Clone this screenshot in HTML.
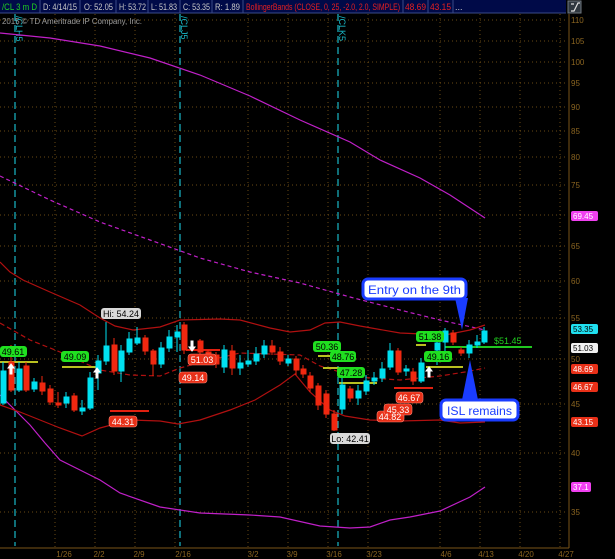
<!DOCTYPE html>
<html><head><meta charset="utf-8"><style>
html,body{margin:0;padding:0;background:#000;}
svg{display:block;font-family:"Liberation Sans",sans-serif;}
</style></head><body>
<svg width="615" height="559" viewBox="0 0 615 559" xmlns="http://www.w3.org/2000/svg">
<rect width="615" height="559" fill="#000"/>
<g stroke="#6a4a14" stroke-width="1" stroke-dasharray="1,3">
<line x1="0" y1="20" x2="566" y2="20"/><line x1="0" y1="41" x2="566" y2="41"/><line x1="0" y1="62" x2="566" y2="62"/><line x1="0" y1="83" x2="566" y2="83"/><line x1="0" y1="107" x2="566" y2="107"/><line x1="0" y1="131" x2="566" y2="131"/><line x1="0" y1="157" x2="566" y2="157"/><line x1="0" y1="185" x2="566" y2="185"/><line x1="0" y1="215" x2="566" y2="215"/><line x1="0" y1="246" x2="566" y2="246"/><line x1="0" y1="281" x2="566" y2="281"/><line x1="0" y1="318" x2="566" y2="318"/><line x1="0" y1="359" x2="566" y2="359"/><line x1="0" y1="404" x2="566" y2="404"/><line x1="0" y1="453" x2="566" y2="453"/><line x1="0" y1="512" x2="566" y2="512"/>
<line x1="55" y1="14" x2="55" y2="548"/><line x1="95" y1="14" x2="95" y2="548"/><line x1="135" y1="14" x2="135" y2="548"/><line x1="175" y1="14" x2="175" y2="548"/><line x1="248" y1="14" x2="248" y2="548"/><line x1="288" y1="14" x2="288" y2="548"/><line x1="328" y1="14" x2="328" y2="548"/><line x1="368" y1="14" x2="368" y2="548"/><line x1="440" y1="14" x2="440" y2="548"/><line x1="480" y1="14" x2="480" y2="548"/><line x1="520" y1="14" x2="520" y2="548"/><line x1="560" y1="14" x2="560" y2="548"/>
</g>
<g stroke="#19b8c8" stroke-width="1.2" stroke-dasharray="7,4">
<line x1="15" y1="14" x2="15" y2="546"/><line x1="180" y1="14" x2="180" y2="546"/><line x1="338" y1="14" x2="338" y2="546"/>
</g>
<g fill="#19b8c8" font-size="9">
<text transform="translate(16,16) rotate(90)">/CLH5</text>
<text transform="translate(181,16) rotate(90)">/CLJ5</text>
<text transform="translate(339,16) rotate(90)">/CLK5</text>
</g>
<text x="2" y="24" fill="#9a9a9a" font-size="8" textLength="140">2015 © TD Ameritrade IP Company, Inc.</text>
<g fill="none" stroke="#c020c8" stroke-width="1.2">
<polyline points="0,33 50,38 100,46 150,58 200,75 250,96 300,120 350,142 380,160 420,178 450,195 485,218"/>
<polyline points="0,395 15,410 30,425 45,443 60,460 80,470 100,480 120,493 160,507 200,513 250,515 280,517 320,526 350,528 370,527 390,520 410,517 440,511 470,497 485,487"/>
<polyline stroke-dasharray="4,3" points="0,176 50,200 100,222 150,240 200,258 250,272 300,283 350,297 400,310 440,320 485,330"/>
</g>
<g fill="none" stroke="#b01010" stroke-width="1.2">
<polyline points="0,262 10,272 23,280 50,292 80,305 100,318 115,326 133,330 160,327 180,320 220,319 240,320 270,328 290,332 310,330 325,323 340,322 360,326 400,333 445,335 470,330 485,325"/>
<polyline points="0,405 20,412 40,420 60,428 82,436 100,428 130,420 160,421 178,424 200,420 230,410 255,400 280,385 295,374 310,392 330,410 345,416 370,420 400,421 440,420 460,423 485,422"/>
<polyline stroke-dasharray="5,3" points="0,323 30,340 60,352 100,370 130,375 160,376 180,368 210,360 240,353 270,354 300,355 320,366 340,372 370,378 400,380 420,378 440,376 465,372 485,368"/>
</g>
<g stroke-width="2">
<line x1="0" y1="362" x2="38" y2="362" stroke="#b8c020"/>
<line x1="62" y1="367" x2="101" y2="367" stroke="#b8c020"/>
<line x1="318" y1="356" x2="348" y2="356" stroke="#b8c020"/>
<line x1="323" y1="368" x2="348" y2="368" stroke="#b8c020"/>
<line x1="339" y1="383" x2="377" y2="383" stroke="#b8c020"/>
<line x1="426" y1="367" x2="463" y2="367" stroke="#b8c020"/>
<line x1="416" y1="345" x2="426" y2="345" stroke="#b8c020"/>
<line x1="110" y1="411" x2="149" y2="411" stroke="#e02010"/>
<line x1="394" y1="388" x2="433" y2="388" stroke="#e02010"/>
<line x1="186" y1="350" x2="220" y2="350" stroke="#e02010"/>
<line x1="445" y1="347" x2="532" y2="347" stroke="#20c820"/>
</g>
<g>
<g stroke="#00e0f0" fill="#00e0f0">
<line x1="3" y1="362" x2="3" y2="405"/><rect x="1" y="371" width="5" height="32"/>
<line x1="19" y1="362" x2="19" y2="392"/><rect x="17" y="369" width="5" height="21"/>
<line x1="34" y1="378" x2="34" y2="392"/><rect x="32" y="382" width="5" height="7"/>
<line x1="66" y1="392" x2="66" y2="408"/><rect x="64" y="397" width="5" height="6"/>
<line x1="82" y1="400" x2="82" y2="415"/><rect x="80" y="408" width="5" height="3"/>
<line x1="90" y1="372" x2="90" y2="410"/><rect x="88" y="378" width="5" height="30"/>
<line x1="98" y1="355" x2="98" y2="390"/><rect x="96" y="361" width="5" height="12"/>
<line x1="106" y1="322" x2="106" y2="365"/><rect x="104" y="346" width="5" height="15"/>
<line x1="121" y1="345" x2="121" y2="382"/><rect x="119" y="351" width="5" height="20"/>
<line x1="129" y1="332" x2="129" y2="355"/><rect x="127" y="339" width="5" height="13"/>
<line x1="137" y1="327" x2="137" y2="345"/><rect x="135" y="338" width="5" height="5"/>
<line x1="161" y1="342" x2="161" y2="368"/><rect x="159" y="348" width="5" height="16"/>
<line x1="169" y1="330" x2="169" y2="352"/><rect x="167" y="337" width="5" height="11"/>
<line x1="177" y1="325" x2="177" y2="352"/><rect x="175" y="332" width="5" height="5"/>
<line x1="224" y1="345" x2="224" y2="373"/><rect x="222" y="350" width="5" height="17"/>
<line x1="240" y1="355" x2="240" y2="375"/><rect x="238" y="363" width="5" height="5"/>
<line x1="248" y1="350" x2="248" y2="367"/><rect x="246" y="361" width="5" height="3"/>
<line x1="256" y1="347" x2="256" y2="365"/><rect x="254" y="354" width="5" height="7"/>
<line x1="264" y1="340" x2="264" y2="358"/><rect x="262" y="346" width="5" height="8"/>
<line x1="288" y1="355" x2="288" y2="366"/><rect x="286" y="359" width="5" height="4"/>
<line x1="342" y1="375" x2="342" y2="414"/><rect x="340" y="385" width="5" height="24"/>
<line x1="358" y1="385" x2="358" y2="405"/><rect x="356" y="391" width="5" height="7"/>
<line x1="366" y1="375" x2="366" y2="395"/><rect x="364" y="381" width="5" height="10"/>
<line x1="374" y1="372" x2="374" y2="385"/><rect x="372" y="378" width="5" height="3"/>
<line x1="382" y1="362" x2="382" y2="382"/><rect x="380" y="369" width="5" height="9"/>
<line x1="390" y1="343" x2="390" y2="370"/><rect x="388" y="351" width="5" height="16"/>
<line x1="406" y1="365" x2="406" y2="376"/><rect x="404" y="369" width="5" height="2"/>
<line x1="421" y1="358" x2="421" y2="383"/><rect x="419" y="363" width="5" height="18"/>
<line x1="437" y1="337" x2="437" y2="365"/><rect x="435" y="343" width="5" height="7"/>
<line x1="445" y1="328" x2="445" y2="352"/><rect x="443" y="331" width="5" height="11"/>
<line x1="469" y1="340" x2="469" y2="358"/><rect x="467" y="345" width="5" height="8"/>
<line x1="477" y1="335" x2="477" y2="348"/><rect x="475" y="342" width="5" height="3"/>
<line x1="484" y1="327" x2="484" y2="344"/><rect x="482" y="331" width="5" height="11"/>
</g>
<g stroke="#f02810" fill="#f02810">
<line x1="11" y1="345" x2="11" y2="392"/><rect x="9" y="362" width="5" height="28"/>
<line x1="26" y1="362" x2="26" y2="392"/><rect x="24" y="366" width="5" height="24"/>
<line x1="42" y1="376" x2="42" y2="395"/><rect x="40" y="383" width="5" height="8"/>
<line x1="50" y1="385" x2="50" y2="405"/><rect x="48" y="389" width="5" height="13"/>
<line x1="58" y1="392" x2="58" y2="408"/><rect x="56" y="403" width="5" height="2"/>
<line x1="74" y1="393" x2="74" y2="412"/><rect x="72" y="396" width="5" height="14"/>
<line x1="114" y1="338" x2="114" y2="375"/><rect x="112" y="345" width="5" height="26"/>
<line x1="145" y1="335" x2="145" y2="355"/><rect x="143" y="338" width="5" height="13"/>
<line x1="153" y1="349" x2="153" y2="376"/><rect x="151" y="351" width="5" height="13"/>
<line x1="184" y1="322" x2="184" y2="354"/><rect x="182" y="325" width="5" height="25"/>
<line x1="200" y1="339" x2="200" y2="358"/><rect x="198" y="341" width="5" height="11"/>
<line x1="208" y1="350" x2="208" y2="360"/><rect x="206" y="352" width="5" height="3"/>
<line x1="216" y1="352" x2="216" y2="368"/><rect x="214" y="355" width="5" height="9"/>
<line x1="232" y1="345" x2="232" y2="375"/><rect x="230" y="351" width="5" height="17"/>
<line x1="272" y1="340" x2="272" y2="355"/><rect x="270" y="346" width="5" height="6"/>
<line x1="280" y1="347" x2="280" y2="365"/><rect x="278" y="352" width="5" height="9"/>
<line x1="296" y1="356" x2="296" y2="375"/><rect x="294" y="359" width="5" height="11"/>
<line x1="303" y1="365" x2="303" y2="378"/><rect x="301" y="369" width="5" height="5"/>
<line x1="310" y1="372" x2="310" y2="392"/><rect x="308" y="376" width="5" height="12"/>
<line x1="318" y1="383" x2="318" y2="410"/><rect x="316" y="386" width="5" height="19"/>
<line x1="326" y1="390" x2="326" y2="418"/><rect x="324" y="394" width="5" height="20"/>
<line x1="334" y1="410" x2="334" y2="431"/><rect x="332" y="414" width="5" height="16"/>
<line x1="350" y1="386" x2="350" y2="402"/><rect x="348" y="389" width="5" height="9"/>
<line x1="398" y1="348" x2="398" y2="375"/><rect x="396" y="351" width="5" height="21"/>
<line x1="413" y1="368" x2="413" y2="385"/><rect x="411" y="372" width="5" height="9"/>
<line x1="453" y1="330" x2="453" y2="345"/><rect x="451" y="333" width="5" height="9"/>
<line x1="461" y1="347" x2="461" y2="356"/><rect x="459" y="350" width="5" height="3"/>
</g>
</g>
<g fill="#fff" stroke="#fff">
<path d="M11,364 l-3,4 h2 v6 h2 v-6 h2 z"/>
<path d="M97,368 l-3,4 h2 v6 h2 v-6 h2 z"/>
<path d="M429,367 l-3,4 h2 v6 h2 v-6 h2 z"/>
<path d="M192,351 l-3,-4 h2 v-6 h2 v6 h2 z"/>
</g>
<g font-size="9" text-anchor="middle">
<g fill="#20e020"><rect x="0" y="346" width="27" height="11" rx="3"/><rect x="61" y="351" width="28" height="11" rx="3"/><rect x="313" y="341" width="28" height="11" rx="3"/><rect x="330" y="351" width="26" height="11" rx="3"/><rect x="337" y="367" width="28" height="11" rx="3"/><rect x="416" y="331" width="28" height="11" rx="3"/><rect x="424" y="351" width="28" height="11" rx="3"/></g>
<g fill="#000"><text x="13" y="355">49.61</text><text x="75" y="360">49.09</text><text x="327" y="350">50.36</text><text x="343" y="360">48.76</text><text x="351" y="376">47.28</text><text x="430" y="340">51.38</text><text x="438" y="360">49.16</text></g>
<g fill="#e83018" stroke="#ff8070" stroke-width="0.6"><rect x="188" y="354" width="28" height="11" rx="3"/><rect x="179" y="372" width="28" height="11" rx="3"/><rect x="109" y="416" width="28" height="11" rx="3"/><rect x="377" y="411" width="27" height="11" rx="3"/><rect x="384" y="404" width="28" height="11" rx="3"/><rect x="396" y="392" width="27" height="11" rx="3"/></g>
<g fill="#fff"><text x="202" y="363">51.03</text><text x="193" y="381">49.14</text><text x="123" y="425">44.31</text><text x="390" y="420">44.82</text><text x="398" y="413">45.33</text><text x="409" y="401">46.67</text></g>
<rect x="101" y="308" width="40" height="11" rx="3" fill="#d8d8d8"/><text x="121" y="317" fill="#000">Hi: 54.24</text>
<rect x="330" y="433" width="40" height="11" rx="3" fill="#d8d8d8"/><text x="350" y="442" fill="#000">Lo: 42.41</text>
</g>
<text x="494" y="344" fill="#20d020" font-size="9">$51.45</text>
<path d="M455,298 L462,330 L468,298 Z" fill="#1a3cff"/>
<path d="M462,400 L470,360 L478,400 Z" fill="#1a3cff"/>
<rect x="363" y="279" width="103" height="20" rx="5" fill="#fff" stroke="#1a3cff" stroke-width="3"/>
<text x="368" y="294" font-size="12" fill="#1a3cff" textLength="93" lengthAdjust="spacingAndGlyphs">Entry on the 9th</text>
<rect x="441" y="400" width="77" height="20" rx="5" fill="#fff" stroke="#1a3cff" stroke-width="3"/>
<text x="447" y="415" font-size="12" fill="#1a3cff" textLength="65" lengthAdjust="spacingAndGlyphs">ISL remains</text>
<line x1="569" y1="14" x2="569" y2="548" stroke="#7a5418"/>
<line x1="0" y1="548" x2="569" y2="548" stroke="#7a5418"/>
<g fill="#8a6420" font-size="8">
<text x="571" y="23">110</text><text x="571" y="44">105</text><text x="571" y="65">100</text><text x="571" y="86">95</text><text x="571" y="110">90</text><text x="571" y="134">85</text><text x="571" y="160">80</text><text x="571" y="188">75</text><text x="571" y="249">65</text><text x="571" y="284">60</text><text x="571" y="321">55</text><text x="571" y="362">50</text><text x="571" y="407">45</text><text x="571" y="456">40</text><text x="571" y="515">35</text>
</g>
<g font-size="8">
<rect x="571" y="211" width="27" height="10" rx="2" fill="#f040f0"/><text x="573" y="219" fill="#fff">69.45</text>
<rect x="571" y="324" width="27" height="10" rx="2" fill="#20e0f0"/><text x="573" y="332" fill="#000">53.35</text>
<rect x="571" y="343" width="27" height="10" rx="2" fill="#f0f0f0"/><text x="573" y="351" fill="#000">51.03</text>
<rect x="571" y="364" width="27" height="10" rx="2" fill="#e83018"/><text x="573" y="372" fill="#fff">48.69</text>
<rect x="571" y="382" width="27" height="10" rx="2" fill="#e83018"/><text x="573" y="390" fill="#fff">46.67</text>
<rect x="571" y="417" width="27" height="10" rx="2" fill="#e83018"/><text x="573" y="425" fill="#fff">43.15</text>
<rect x="571" y="482" width="20" height="10" rx="2" fill="#f040f0"/><text x="573" y="490" fill="#fff">37.1</text>
</g>
<g fill="#8a6420" font-size="8" text-anchor="middle">
<text x="64" y="557">1/26</text><text x="99" y="557">2/2</text><text x="139" y="557">2/9</text><text x="183" y="557">2/16</text><text x="253" y="557">3/2</text><text x="292" y="557">3/9</text><text x="334" y="557">3/16</text><text x="374" y="557">3/23</text><text x="446" y="557">4/6</text><text x="486" y="557">4/13</text><text x="526" y="557">4/20</text><text x="566" y="557">4/27</text>
</g>
<rect x="0" y="0" width="566" height="13" fill="#000a48"/>
<g stroke="#3a4a88"><line x1="40" y1="0" x2="40" y2="13"/><line x1="80" y1="0" x2="80" y2="13"/><line x1="116" y1="0" x2="116" y2="13"/><line x1="148" y1="0" x2="148" y2="13"/><line x1="180" y1="0" x2="180" y2="13"/><line x1="212" y1="0" x2="212" y2="13"/><line x1="243" y1="0" x2="243" y2="13"/><line x1="403" y1="0" x2="403" y2="13"/><line x1="428" y1="0" x2="428" y2="13"/><line x1="453" y1="0" x2="453" y2="13"/><line x1="0" y1="13" x2="566" y2="13"/></g>
<g font-size="9" lengthAdjust="spacingAndGlyphs">
<text x="2" y="10" fill="#20d020" textLength="35" lengthAdjust="spacingAndGlyphs">/CL 3 m D</text>
<g fill="#c8c8c8"><text x="43" y="10" textLength="34" lengthAdjust="spacingAndGlyphs">D: 4/14/15</text><text x="84" y="10" textLength="29" lengthAdjust="spacingAndGlyphs">O: 52.05</text><text x="119" y="10" textLength="27" lengthAdjust="spacingAndGlyphs">H: 53.72</text><text x="151" y="10" textLength="26" lengthAdjust="spacingAndGlyphs">L: 51.83</text><text x="183" y="10" textLength="27" lengthAdjust="spacingAndGlyphs">C: 53.35</text><text x="215" y="10" textLength="25" lengthAdjust="spacingAndGlyphs">R: 1.89</text><text x="455" y="10">...</text></g>
<g fill="#e82020"><text x="246" y="10" textLength="154" lengthAdjust="spacingAndGlyphs">BollingerBands (CLOSE, 0, 25, -2.0, 2.0, SIMPLE)</text><text x="405" y="10" textLength="21" lengthAdjust="spacingAndGlyphs">48.69</text><text x="430" y="10" textLength="21" lengthAdjust="spacingAndGlyphs">43.15</text></g>
</g>
<rect x="568" y="1" width="13" height="12" fill="#303840" stroke="#707880"/>
<path d="M571,11 h3 l4,-8 h2 M571,4 h3" stroke="#e0e0e0" fill="none" stroke-width="1.2"/>
</svg>
</body></html>
